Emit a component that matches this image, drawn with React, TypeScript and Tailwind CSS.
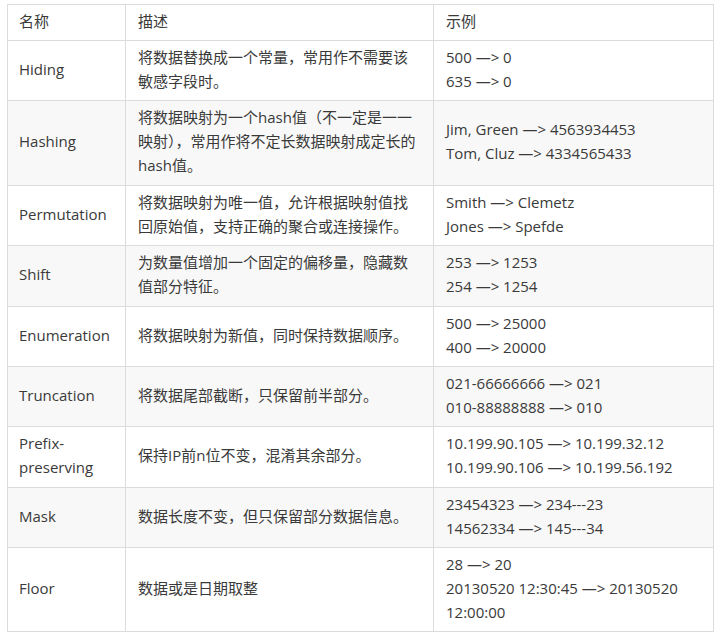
const rows: { name: string; desc: string; examples: string[]; h: string }[] = [
  { name: 'Hiding', desc: '将数据替换成一个常量，常用作不需要该敏感字段时。', examples: ['500 —> 0', '635 —> 0'], h: 'h-[60px]' },
  {
    name: 'Hashing',
    desc: '将数据映射为一个hash值（不一定是一一映射），常用作将不定长数据映射成定长的hash值。',
    examples: ['Jim, Green —> 4563934453', 'Tom, Cluz —> 4334565433'],
    h: 'h-[85px]',
  },
  {
    name: 'Permutation',
    desc: '将数据映射为唯一值，允许根据映射值找回原始值，支持正确的聚合或连接操作。',
    examples: ['Smith —> Clemetz', 'Jones —> Spefde'],
    h: 'h-[60px]',
  },
  { name: 'Shift', desc: '为数量值增加一个固定的偏移量，隐藏数值部分特征。', examples: ['253 —> 1253', '254 —> 1254'], h: 'h-[61px]' },
  { name: 'Enumeration', desc: '将数据映射为新值，同时保持数据顺序。', examples: ['500 —> 25000', '400 —> 20000'], h: 'h-[60px]' },
  { name: 'Truncation', desc: '将数据尾部截断，只保留前半部分。', examples: ['021-66666666 —> 021', '010-88888888 —> 010'], h: 'h-[60px]' },
  {
    name: 'Prefix-preserving',
    desc: '保持IP前n位不变，混淆其余部分。',
    examples: ['10.199.90.105 —> 10.199.32.12', '10.199.90.106 —> 10.199.56.192'],
    h: 'h-[61px]',
  },
  { name: 'Mask', desc: '数据长度不变，但只保留部分数据信息。', examples: ['23454323 —> 234---23', '14562334 —> 145---34'], h: 'h-[60px]' },
  { name: 'Floor', desc: '数据或是日期取整', examples: ['28 —> 20', '20130520 12:30:45 —> 20130520 12:00:00'], h: 'h-[84px]' },
]

export default function App() {
  return (
    <div
      className="w-[720px] h-[637px] bg-white pt-1 pl-[7px] text-[15px] leading-6 text-[#3a3a3a]"
      style={{ fontFamily: '"Open Sans", "Noto Sans CJK SC", sans-serif' }}
    >
      <table className="w-[706px] border-collapse table-fixed">
        <colgroup>
          <col className="w-[118px]" />
          <col className="w-[308px]" />
          <col className="w-[280px]" />
        </colgroup>
        <thead>
          <tr className="h-[36px]">
            <th className="border border-[#dcdcdc] px-[11px] pt-0 pb-1 text-left font-normal align-middle">名称</th>
            <th className="border border-[#dcdcdc] px-3 pt-0 pb-1 text-left font-normal align-middle">描述</th>
            <th className="border border-[#dcdcdc] px-3 pt-0 pb-1 text-left font-normal align-middle">示例</th>
          </tr>
        </thead>
        <tbody>
          {rows.map((r, i) => (
            <tr key={r.name} className={(i % 2 === 1 ? 'bg-[#f8f8f8] ' : 'bg-white ') + r.h}>
              <td className="border border-[#dcdcdc] px-[11px] pt-0 pb-1 align-middle">
                {r.name === 'Prefix-preserving' ? (
                  <>
                    Prefix-
                    <br />
                    preserving
                  </>
                ) : (
                  r.name
                )}
              </td>
              <td className="border border-[#dcdcdc] px-3 pt-0 pb-1 align-middle">{r.desc}</td>
              <td className="border border-[#dcdcdc] px-3 pt-0 pb-1 align-middle">
                {r.examples.map((e) => (
                  <div key={e}>{e}</div>
                ))}
              </td>
            </tr>
          ))}
        </tbody>
      </table>
    </div>
  )
}
